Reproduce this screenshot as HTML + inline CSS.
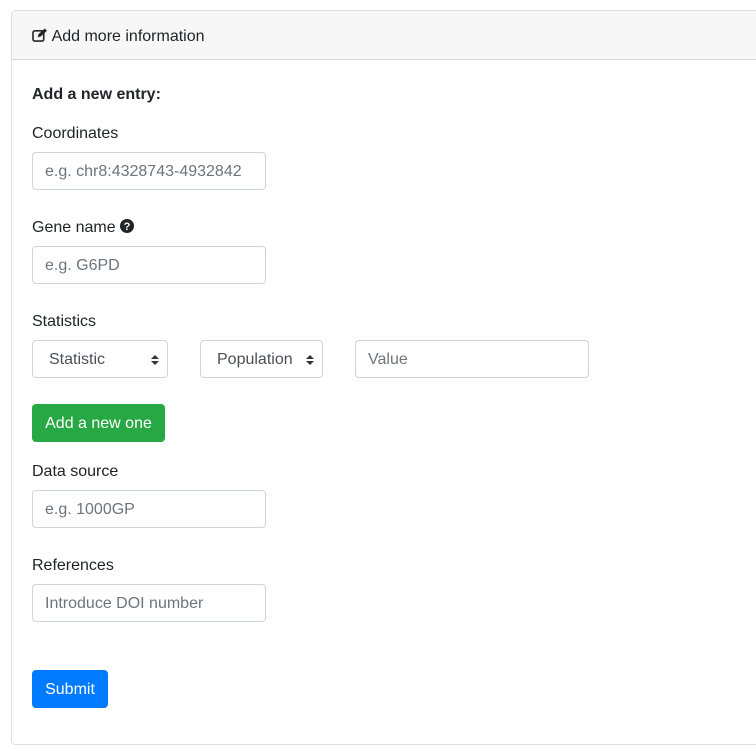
<!DOCTYPE html>
<html><head><style>
body{margin:0;background:#fff;font-family:"Liberation Sans",Arial,sans-serif;font-size:16px;color:#212529;width:756px;height:751px;position:relative;overflow:hidden}
.card{position:absolute;left:11px;top:10px;width:760px;height:733px;border:1px solid rgba(0,0,0,.125);border-radius:4px}
.hdr{position:absolute;left:0;top:0;right:0;height:48px;background:#f7f7f7;border-bottom:1px solid rgba(0,0,0,.125)}
.a{position:absolute;line-height:24px}
.inp{position:absolute;box-sizing:border-box;height:38px;border:1px solid #ced4da;border-radius:4px;padding:0 12px;line-height:38px;color:#6c757d;background:#fff}
.sel{color:#495057;padding-left:16px}
.arr{position:absolute;right:12px;top:14px;width:0;height:0}
.arr:before{content:"";position:absolute;left:-4px;top:0;border:4px solid transparent;border-top:0;border-bottom:4px solid #333}
.arr:after{content:"";position:absolute;left:-4px;top:6px;border:4px solid transparent;border-bottom:0;border-top:4px solid #333}
.btn{position:absolute;box-sizing:border-box;height:38px;border-radius:4px;color:#fff;line-height:40px;text-align:center}
</style></head><body>
<div class="card"><div class="hdr"></div></div>
<div class="a" style="left:32px;top:25px">
<svg width="16" height="14" viewBox="0 0 17 15" style="vertical-align:-1px"><rect x="1" y="3" width="11.5" height="11" rx="2" fill="none" stroke="#212529" stroke-width="1.7"/><path d="M6 10 L7 6.5 L13.5 0.5 L16 3 L9.5 9 Z" fill="#212529"/></svg> Add more information</div>
<div class="a" style="left:32px;top:83px;font-weight:bold">Add a new entry:</div>
<div class="a" style="left:32px;top:122px">Coordinates</div>
<div class="inp" style="left:32px;top:152px;width:234px">e.g. chr8:4328743-4932842</div>
<div class="a" style="left:32px;top:216px">Gene name <svg width="14" height="14" viewBox="0 0 14 14" style="vertical-align:-1px"><circle cx="7" cy="7" r="7" fill="#212529"/><text x="7" y="11" font-size="11" font-weight="bold" text-anchor="middle" fill="#fff" font-family="Liberation Sans">?</text></svg></div>
<div class="inp" style="left:32px;top:246px;width:234px">e.g. G6PD</div>
<div class="a" style="left:32px;top:310px">Statistics</div>
<div class="inp sel" style="left:32px;top:340px;width:136px">Statistic<span class="arr"></span></div>
<div class="inp sel" style="left:200px;top:340px;width:123px">Population<span class="arr"></span></div>
<div class="inp" style="left:355px;top:340px;width:234px">Value</div>
<div class="btn" style="left:32px;top:404px;width:133px;background:#28a745">Add a new one</div>
<div class="a" style="left:32px;top:460px">Data source</div>
<div class="inp" style="left:32px;top:490px;width:234px">e.g. 1000GP</div>
<div class="a" style="left:32px;top:554px">References</div>
<div class="inp" style="left:32px;top:584px;width:234px">Introduce DOI number</div>
<div class="btn" style="left:32px;top:670px;width:76px;background:#007bff">Submit</div>
</body></html>
